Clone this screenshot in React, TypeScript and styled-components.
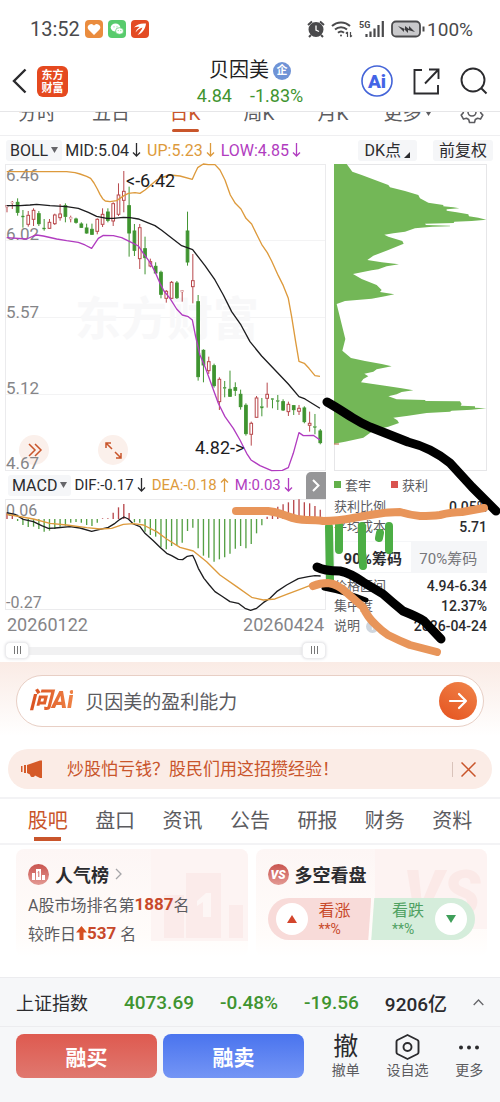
import React from "react";
import styled, { createGlobalStyle } from "styled-components";

const GlobalStyle = createGlobalStyle`
  * { box-sizing: border-box; }
  body {
    margin: 0;
    background: #fff;
    color: #2b2b2e;
    font-family: Roboto, "Noto Sans CJK SC", sans-serif;
  }
  button, input { font: inherit; color: inherit; border: 0; padding: 0; margin: 0; background: none; }
  button { cursor: pointer; }
  svg { display: block; flex: none; }
  dl, dd, dt, h1, h2, p { margin: 0; font-weight: 400; }
`;

const GREEN = "#3f9430";
const ORANGE = "#dd9a3c";
const PURPLE = "#b13cc0";
const ACCENT = "#c9552b";

/* ---------- status bar and header ---------- */

const StatusBar = styled.div`
  display: flex;
  align-items: center;
  justify-content: space-between;
  height: 58px;
  padding: 0 27px 0 30px;
  font-size: 20px;
  color: #4a4a4c;
`;
const StatusGroup = styled.div<{ $gap: number }>`
  display: flex;
  align-items: center;
  gap: ${(p) => p.$gap}px;
`;
const BatteryLevel = styled.span`
  display: flex;
  align-items: center;
  gap: 2px;
  font-size: 19px;
`;
const Header = styled.header`
  display: grid;
  grid-template-columns: 1fr auto 1fr;
  height: 54px;
  padding: 0 12px;
  border-bottom: 1px solid #e6e6e8;
`;
const HeaderSide = styled.div<{ $end?: boolean }>`
  display: flex;
  align-items: center;
  justify-content: ${(p) => (p.$end ? "flex-end" : "flex-start")};
  gap: ${(p) => (p.$end ? 20 : 10)}px;
  height: 46px;
`;
const IconButton = styled.button`
  display: flex;
  align-items: center;
  justify-content: center;
`;
const AppLogo = styled.span`
  display: grid;
  place-content: center;
  width: 31px;
  height: 31px;
  border-radius: 6px;
  background: #e5491f;
  color: #fff;
  font: 700 11px/13px "Noto Sans CJK SC", sans-serif;
  text-align: center;
`;
const StockTitle = styled.h1`
  display: flex;
  align-items: center;
  justify-content: center;
  gap: 4px;
  font-size: 20px;
  line-height: 25px;
  color: #1f1f22;
`;
const CompanyBadge = styled.span`
  display: grid;
  place-content: center;
  width: 18px;
  height: 18px;
  border-radius: 50%;
  background: #6f93d6;
  color: #fff;
  font-size: 11px;
  font-weight: 700;
  line-height: 16px;
`;
const StockPrice = styled.div`
  display: flex;
  justify-content: center;
  gap: 18px;
  font-size: 18px;
  line-height: 25px;
  color: ${GREEN};
`;

/* ---------- chart tabs and indicator bars ---------- */

const PeriodTabs = styled.nav`
  display: flex;
  align-items: flex-end;
  height: 24px;
  overflow: hidden;
  border-bottom: 1px solid #efeff1;
`;
const PeriodTab = styled.button<{ $active?: boolean }>`
  position: relative;
  display: flex;
  align-items: center;
  justify-content: center;
  gap: 4px;
  flex: 74;
  height: 36px;
  padding-bottom: 6px;
  font-size: 19px;
  line-height: 26px;
  color: ${(p) => (p.$active ? ACCENT : "#5c5c60")};
  &::after {
    content: "";
    position: absolute;
    bottom: 3px;
    width: 27px;
    height: 3px;
    border-radius: 2px;
    background: ${(p) => (p.$active ? ACCENT : "transparent")};
  }
`;
const SettingsTab = styled(PeriodTab)`
  flex: 56;
  padding-bottom: 10px;
`;
const IndicatorBar = styled.div`
  display: flex;
  align-items: center;
  gap: 3px;
  height: 28px;
  padding: 0 7px 0 6px;
`;
const Chip = styled.button`
  display: flex;
  align-items: center;
  gap: 3px;
  height: 21px;
  padding: 0 4px;
  border-radius: 3px;
  background: #f5f6f8;
  font-size: 16px;
  line-height: 21px;
  white-space: nowrap;
`;
const ChipGroup = styled.div`
  display: flex;
  gap: 16px;
  margin-left: auto;
`;
const OptionChip = styled(Chip)`
  padding: 0 6px;
`;
const Reading = styled.span<{ $color: string; $small?: boolean }>`
  display: flex;
  align-items: center;
  gap: 3px;
  font-size: ${(p) => (p.$small ? 15 : 16)}px;
  line-height: 21px;
  white-space: nowrap;
  margin-right: 3px;
  color: ${(p) => p.$color};
`;

/* ---------- chart area ---------- */

const ChartSection = styled.section`
  position: relative;
`;
const ChartGrid = styled.div`
  display: grid;
  grid-template-columns: 321fr 153fr;
  column-gap: 8px;
  padding: 0 13px 0 5px;
`;
const ChartSvg = styled.svg`
  width: 100%;
  height: auto;
  overflow: visible;
  font-family: Roboto, "Noto Sans CJK SC", sans-serif;
`;
const MacdBar = styled(IndicatorBar)`
  padding: 0 0 0 3px;
`;
const NextButton = styled(IconButton)`
  width: 20px;
  height: 27px;
  margin-left: auto;
  border-radius: 5px 0 0 0;
  background: #969698;
`;
const Dates = styled.div`
  display: flex;
  justify-content: space-between;
  padding: 0 2px 0 2px;
  font-size: 18px;
  line-height: 30px;
  color: #858588;
`;
const RangeTrack = styled.div`
  position: relative;
  height: 22px;
  padding: 7px 4px;
  &::before {
    content: "";
    display: block;
    height: 8px;
    background: #f1f1f2;
  }
`;
const RangeInput = styled.input`
  position: absolute;
  inset: 1px 0 auto 0;
  width: 100%;
  height: 18px;
  appearance: none;
  pointer-events: none;
  &::-webkit-slider-thumb {
    appearance: none;
    pointer-events: auto;
    width: 24px;
    height: 17px;
    border: 1px solid #ececee;
    border-radius: 5px;
    background: linear-gradient(90deg, #777 1px, transparent 1px 3px, #777 3px 4px, transparent 4px 6px, #777 6px 7px) center / 7px 8px no-repeat #fff;
    box-shadow: 0 0 3px #dcdce0;
  }
`;
const Legend = styled.div`
  display: flex;
  align-items: center;
  gap: 20px;
  height: 26px;
  font-size: 13px;
  color: #5b5b5f;
`;
const LegendItem = styled.span<{ $color: string }>`
  display: flex;
  align-items: center;
  gap: 4px;
  &::before {
    content: "";
    width: 7px;
    height: 7px;
    background: ${(p) => p.$color};
  }
`;
const StatRow = styled.div`
  display: flex;
  align-items: center;
  justify-content: space-between;
  height: 20px;
  line-height: 18px;
  white-space: nowrap;
  dt { display: flex; align-items: center; gap: 6px; font-size: 13px; color: #5b5b5f; }
  dd { font-size: 14px; font-weight: 500; color: #2b2b2e; }
`;
const InfoDot = styled.span`
  width: 13px;
  height: 13px;
  border-radius: 50%;
  background: #cfd6de;
  color: #fff;
  font-size: 10px;
  line-height: 13px;
  text-align: center;
`;
const ChipsToggle = styled.div`
  display: grid;
  grid-template-columns: 1fr 1fr;
  height: 32px;
  margin: 4px 0 3px;
  border: 1px solid #f5f6f8;
`;
const ToggleButton = styled.button<{ $active?: boolean }>`
  background: ${(p) => (p.$active ? "#fff" : "#f5f6f8")};
  color: ${(p) => (p.$active ? "#2b2b2e" : "#77777b")};
  font-size: 15px;
  font-weight: ${(p) => (p.$active ? 700 : 400)};
  white-space: nowrap;
`;
const Drawing = styled.svg`
  position: absolute;
  top: 0;
  left: 0;
  width: 100%;
  height: auto;
  pointer-events: none;
`;

/* ---------- AI question and banner ---------- */

const AskSection = styled.section`
  padding: 13px 16px 22px;
  background: linear-gradient(#faebe5, #fff 85%);
`;
const AskForm = styled.form`
  display: flex;
  align-items: center;
  gap: 12px;
  height: 52px;
  padding: 0 6px 0 12px;
  border: 1px solid #e8cfc5;
  border-radius: 26px;
  background: #fff;
`;
const AskLogo = styled.span`
  font-size: 23px;
  line-height: 30px;
  font-weight: 900;
  font-style: italic;
  white-space: nowrap;
  background: linear-gradient(90deg, #d94f1e, #ee8246);
  background-clip: text;
  color: transparent;
`;
const AskInput = styled.input`
  flex: 1;
  min-width: 0;
  height: 30px;
  padding-bottom: 2px;
  font-size: 19px;
  color: #5b5b5f;
  outline: 0;
`;
const AskSubmit = styled(IconButton)`
  width: 38px;
  height: 38px;
  border-radius: 50%;
  background: linear-gradient(210deg, #f0854a, #e5521f);
`;
const Banner = styled.aside`
  display: flex;
  align-items: center;
  height: 40px;
  margin: 0 8px 8px;
  padding: 0 16px 0 13px;
  border-radius: 20px;
  background: #fbece6;
  color: ${ACCENT};
`;
const BannerText = styled.p`
  flex: 1;
  margin-left: 24px;
  font-size: 17px;
  line-height: 26px;
`;
const BannerClose = styled(IconButton)`
  padding-left: 8px;
  border-left: 1px solid #d9c3ba;
`;

/* ---------- section tabs and cards ---------- */

const SectionTabs = styled.nav`
  display: flex;
  height: 48px;
  padding: 0 14px;
  border-top: 2px solid #f3f3f5;
  border-bottom: 2px solid #f3f3f5;
`;
const SectionTab = styled.button<{ $active?: boolean }>`
  position: relative;
  flex: 1;
  font-size: 20px;
  line-height: 44px;
  color: ${(p) => (p.$active ? ACCENT : "#5b5b5f")};
  &::after {
    content: "";
    position: absolute;
    left: calc(50% - 14px);
    bottom: 2px;
    width: 27px;
    height: 4px;
    background: ${(p) => (p.$active ? ACCENT : "transparent")};
  }
`;
const Cards = styled.section`
  display: grid;
  grid-template-columns: 1fr 1fr;
  gap: 8px;
  padding: 4px 13px 20px 16px;
`;
const Card = styled.article`
  position: relative;
  height: 108px;
  padding: 11px 12px 0;
  border-radius: 8px;
  overflow: hidden;
  background: linear-gradient(#fdf6f5, #fffcfa 80%, #fff);
`;
const CardArt = styled.svg`
  position: absolute;
  top: 0;
  right: 0;
`;
const CardTitle = styled.h2`
  position: relative;
  display: flex;
  align-items: center;
  gap: 6px;
  height: 28px;
  font-size: 18px;
  font-weight: 700;
`;
const CardLine = styled.p`
  position: relative;
  display: flex;
  align-items: center;
  margin-top: 3px;
  height: 26px;
  font-size: 16px;
  color: #5b5b5f;
  white-space: nowrap;
  strong { font-size: 17px; color: #c8492a; }
`;
const Vote = styled.div`
  position: relative;
  display: grid;
  grid-template-columns: 1fr 1fr;
  height: 42px;
  margin-top: 10px;
  border-radius: 21px;
  overflow: hidden;
`;
const VoteButton = styled.button<{ $up?: boolean }>`
  display: flex;
  flex-direction: ${(p) => (p.$up ? "row" : "row-reverse")};
  align-items: center;
  gap: 11px;
  padding: 0 8px;
  background: ${(p) => (p.$up ? "#f8dbd9" : "#d5eddb")};
  color: ${(p) => (p.$up ? "#c8492a" : "#4fa162")};
  clip-path: ${(p) => (p.$up ? "polygon(0 0, 100% 0, calc(100% - 3px) 100%, 0 100%)" : "polygon(3px 0, 100% 0, 100% 100%, 0 100%)")};
`;
const VoteMark = styled.span`
  display: grid;
  place-content: center;
  width: 32px;
  height: 32px;
  border-radius: 50%;
  background: #fff;
`;
const VoteLabel = styled.span`
  display: flex;
  flex-direction: column;
  text-align: left;
  font-size: 16px;
  line-height: 20px;
  small { font-size: 14px; line-height: 16px; }
`;

/* ---------- footer ---------- */

const Footer = styled.footer`
  background: #f6f7f9;
  border-top: 1px solid #ececef;
`;
const IndexRow = styled.div`
  display: flex;
  align-items: center;
  justify-content: space-between;
  height: 48px;
  padding: 0 16px;
  font-size: 18px;
  white-space: nowrap;
`;
const IndexName = styled.span`
  margin-right: 10px;
`;
const IndexValue = styled.span<{ $color?: string }>`
  font-size: 19px;
  font-weight: 500;
  color: ${(p) => p.$color ?? "#2b2b2e"};
`;
const ActionRow = styled.div`
  display: flex;
  gap: 11px;
  height: 77px;
  padding: 7px 0 0 16px;
  border-top: 1px solid #ececef;
`;
const TradeButtons = styled.div`
  display: flex;
  gap: 6px;
  flex: 288;
`;
const TradeButton = styled.button<{ $from: string; $to: string }>`
  flex: 1;
  height: 44px;
  border-radius: 8px;
  background: linear-gradient(${(p) => p.$from}, ${(p) => p.$to});
  color: #fff;
  font-size: 21px;
  font-weight: 700;
`;
const ToolButtons = styled.div`
  display: flex;
  flex: 185;
`;
const ToolButton = styled.button`
  display: flex;
  flex-direction: column;
  align-items: center;
  flex: 1;
  height: 48px;
  font-size: 14px;
  line-height: 20px;
  color: #5b5b5f;
  white-space: nowrap;
`;
const ToolIcon = styled.span`
  display: flex;
  align-items: center;
  height: 26px;
  font-size: 25px;
  color: #2b2b2e;
`;

/* ---------- data ---------- */

// rising flag, high, body top, body bottom, low
const candles: [number, number, number, number, number][] = [
  [1, 150, 151, 156, 172], [1, 138, 141, 145, 162], [0, 130, 142, 172, 182], [0, 165, 183, 186, 218],
  [1, 168, 181, 208, 215], [1, 160, 166, 193, 213], [0, 168, 176, 206, 213], [0, 192, 219, 222, 227],
  [1, 192, 202, 220, 222], [1, 176, 180, 206, 210], [1, 147, 177, 188, 197], [0, 145, 152, 184, 202],
  [1, 182, 187, 192, 202], [0, 188, 192, 202, 206], [0, 202, 207, 217, 219], [0, 206, 219, 234, 236],
  [0, 206, 223, 238, 239], [1, 190, 193, 229, 238], [1, 160, 178, 208, 216], [0, 160, 171, 196, 202],
  [1, 142, 146, 198, 213], [1, 85, 120, 178, 183], [1, 48, 109, 136, 172], [0, 95, 152, 234, 305],
  [0, 207, 228, 286, 303], [1, 207, 218, 311, 342], [0, 245, 281, 308, 358], [1, 311, 320, 333, 337],
  [0, 322, 334, 354, 356], [0, 347, 352, 418, 430], [1, 405, 409, 430, 443], [1, 378, 382, 430, 432],
  [0, 378, 384, 428, 432], [1, 405, 407, 411, 440], [0, 170, 228, 321, 332], [1, 297, 377, 395, 445],
  [0, 420, 440, 665, 677], [0, 583, 586, 630, 682], [1, 605, 620, 647, 657], [0, 626, 632, 692, 698],
  [1, 667, 673, 740, 765], [0, 678, 697, 700, 727], [0, 647, 703, 724, 725], [0, 682, 698, 706, 723],
  [0, 704, 718, 755, 764], [0, 745, 751, 836, 842], [1, 800, 805, 838, 872], [1, 723, 729, 787, 788],
  [0, 729, 755, 759, 784], [1, 683, 718, 730, 758], [0, 730, 731, 734, 760], [0, 720, 737, 740, 765],
  [0, 733, 740, 765, 768], [1, 740, 748, 770, 783], [0, 750, 752, 764, 780], [1, 750, 760, 769, 780],
  [0, 754, 759, 800, 805], [1, 770, 805, 811, 830], [0, 777, 815, 818, 838], [0, 822, 828, 863, 868],
];
const upper =
  "20,50 200,50 225,53 240,57 260,64 272,70 282,84 292,102 300,118 308,131 316,138 330,140 350,137 372,122 385,115 405,113 420,115 435,105 450,92 470,75 490,66 510,60 540,63 577,73 585,55 593,38 610,27 625,29 645,29 660,45 675,75 691,120 706,145 723,162 738,190 755,207 770,238 785,268 802,293 815,318 835,362 850,392 865,430 875,485 887,560 897,619 913,625 927,640 945,662 960,664";
const middle =
  "20,152 60,152 90,150 110,148 150,152 200,155 235,160 265,172 290,184 320,190 340,190 370,187 390,188 415,192 435,200 465,212 485,226 512,247 545,272 578,284 615,332 645,375 670,420 695,470 723,510 750,560 785,603 825,645 865,687 897,725 915,732 960,760";
const lower =
  "20,248 80,252 100,243 110,240 130,243 170,252 200,257 235,262 255,270 275,280 285,265 295,250 310,241 340,242 365,248 400,265 415,273 430,295 450,322 465,350 480,385 492,408 510,430 530,462 547,480 565,485 577,495 587,545 600,600 615,635 635,690 655,745 675,785 700,820 720,855 740,895 753,915 780,932 815,947 847,946 865,938 880,895 897,833 910,842 940,841 960,855";
const profile =
  "27,27 65,27 82,50 110,60 190,90 195,97 240,108 280,120 285,130 310,143 355,150 355,154 385,157 403,160 365,163 365,167 395,172 430,178 432,184 460,188 484,194 440,198 388,200 386,204 300,206 303,210 375,212 375,214 322,215 270,220 240,230 205,235 178,239 190,245 232,258 236,266 190,285 145,302 127,315 170,322 222,328 185,334 160,343 140,346 84,357 110,372 155,390 170,405 165,411 208,418 180,424 140,431 60,438 35,447 61,552 52,587 78,609 120,618 170,627 200,634 155,643 145,650 118,656 130,664 115,672 108,682 180,692 230,700 265,706 230,711 215,718 190,724 215,733 300,735 302,738 405,739 410,747 407,752 450,754 450,758 484,760 440,764 380,767 375,770 305,774 250,782 205,788 217,796 222,804 190,815 160,822 140,830 115,848 60,860 27,866";
const macdEnds = [
  130, 135, 153, 165, 171, 170, 177, 185, 182, 177, 170, 167, 158, 156, 158, 165, 168, 158, 145, 145,
  128, 112, 102, 129, 157, 158, 185, 195, 200, 232, 238, 228, 225, 218, 183, 173, 235, 257, 263, 275,
  268, 262, 251, 236, 228, 235, 222, 190, 166, 140, 130, 110, 103, 97, 90, 88, 97, 100, 108, 119,
];
const dif =
  "20,128 45,133 70,148 100,155 125,167 145,175 165,174 210,170 240,174 275,184 300,178 325,172 345,160 360,148 372,141 385,147 400,162 420,170 435,190 460,212 480,232 500,250 515,257 535,268 548,269 562,259 578,256 585,270 595,295 612,325 628,345 645,365 665,378 690,395 715,400 735,415 752,421 770,415 790,398 810,385 830,365 860,345 895,326 925,320 945,317 962,318";
const dea =
  "20,133 50,138 100,147 150,160 200,165 260,173 300,177 335,175 370,163 400,161 430,165 470,185 500,207 540,232 580,243 620,275 660,315 710,350 755,382 790,390 825,387 860,373 900,358 935,345 960,337";

/* ---------- small drawings ---------- */

const Arrow = ({ up }: { up?: boolean }) => (
  <svg width="9" height="16" viewBox="0 0 9 16" fill="none" stroke="currentColor" strokeWidth="1.3">
    <path d={up ? "M4.5 15V2M1 5.5 4.5 2 8 5.5" : "M4.5 1v13M1 10.500 4.500 14 8 10.500"} />
  </svg>
);
const Caret = () => (
  <svg width="7" height="6" viewBox="0 0 7 6"><path d="M0 0h7L3.500 6z" fill="#66666a" /></svg>
);
const CardIcon = ({ kind }: { kind: "rank" | "vs" }) => (
  <svg width="21" height="21" viewBox="0 0 21 21">
    <defs>
      <linearGradient id={kind} x1="0" y1="0" x2="0" y2="1">
        <stop offset="0" stopColor="#c9544f" />
        <stop offset="1" stopColor="#e39a94" />
      </linearGradient>
    </defs>
    <circle cx="10.500" cy="10.500" r="10.500" fill={`url(#${kind})`} />
    {kind === "rank" ? (
      <>
        <path d="M4 9h3v7H4zM8 5h5v11H8zM14 11h3v5h-3z" fill="#fff" />
        <path d="M9.700 8.500 10.800 7.500V13" stroke="#cf6a64" fill="none" />
      </>
    ) : (
      <text x="10" y="15" fontSize="12" fontWeight="900" fontStyle="italic" fill="#fff" textAnchor="middle">VS</text>
    )}
  </svg>
);

/* ---------- charts ---------- */

const PriceChart = () => (
  <ChartSvg viewBox="0 0 321 307">
    <path d="M0 76.500h321M0 153.500h321M0 230.500h321" stroke="#f3f3f4" />
    <rect x=".5" y=".5" width="320" height="306" fill="none" stroke="#ebebed" />
    <text x="70" y="171" fontSize="46" fontWeight="700" fill="#f8f8f9">东方财富</text>
    <g fill="#fbf0eb">
      <circle cx="29" cy="286" r="15" />
      <circle cx="108" cy="286" r="15" />
    </g>
    <g fontSize="17" fill="#858588">
      <text x="1" y="17">6.46</text>
      <text x="1" y="76">6.02</text>
      <text x="1" y="154">5.57</text>
      <text x="1" y="230">5.12</text>
      <text x="1" y="305">4.67</text>
    </g>
    <g fill="none" stroke={ACCENT} strokeWidth="1.500">
      <path d="M24 280l6 6-6 6M30 280l6 6-6 6" />
      <path d="M107 285l-6-6M101 284v-5h5M110 288l6 6M116 289v5h-5" />
    </g>
    <g transform="translate(-5 -9) scale(.3333)" strokeWidth="3">
      {candles.map(([up, high, top, bottom, low], i) => {
        const x = 21 + i * 15.93;
        const flat = bottom - top < 6;
        return (
          <g key={i} stroke={up ? "#b8474b" : GREEN} fill={up ? "#fff" : GREEN}>
            <path d={`M${x} ${high}V${top}M${x} ${bottom}V${low}`} />
            <rect x={x - 4} y={top} width="8" height={bottom - top} strokeWidth={flat ? 1 : 3} />
          </g>
        );
      })}
      <g fill="none" strokeWidth="4" strokeLinejoin="round">
        <polyline points={upper} stroke={ORANGE} />
        <polyline points={middle} stroke="#1d1d1f" />
        <polyline points={lower} stroke={PURPLE} />
      </g>
    </g>
    <g fontSize="18" fill="#1d1d1f">
      <text x="121" y="23">&lt;-6.42</text>
      <text x="190" y="290">4.82-&gt;</text>
    </g>
  </ChartSvg>
);

const ProfileChart = () => (
  <ChartSvg viewBox="0 0 153 307">
    <rect x=".5" y=".5" width="152" height="306" fill="none" stroke="#e6e6e8" />
    <polygon points={profile} fill="#73b757" transform="translate(-9 -9) scale(.3333)" />
    <path d="M0 280h5" stroke="#b5653a" />
  </ChartSvg>
);

const MacdChart = () => (
  <ChartSvg viewBox="0 0 321 111">
    <rect x=".5" y=".5" width="320" height="110" fill="none" stroke="#ebebed" />
    <g fontSize="16" fill="#858588">
      <text x="1" y="17">0.06</text>
      <text x="1" y="109">-0.27</text>
    </g>
    <g transform="translate(-5 -29) scale(.3333)" fill="none">
      {macdEnds.map((end, i) => (
        <path key={i} d={`M${21 + i * 15.93} 147V${end}`} stroke={end < 147 ? "#b8474b" : "#55a045"} strokeWidth="4" />
      ))}
      <polyline points={dif} stroke="#1d1d1f" strokeWidth="4" strokeLinejoin="round" />
      <polyline points={dea} stroke={ORANGE} strokeWidth="4" strokeLinejoin="round" />
    </g>
  </ChartSvg>
);

const HandDrawing = () => (
  <Drawing viewBox="0 164 500 498" fill="none" strokeWidth="8" strokeLinecap="round" strokeLinejoin="round">
    <g stroke="#4cae45">
      <path d="M329 527 330 580M339 524V550M362 526V552L363 566M380 533 379 538M389 526V550" />
    </g>
    <path d="M324 588Q345 592 366 600" stroke="#000" strokeWidth="5" />
    <path d="M327 402C336 407 345 413 353 418Q361 423 370 427L408 442Q420 445 430 450T450 463L472 487 496 511" stroke="#000" strokeWidth="9" />
    <path d="M317 567Q324 571 340 571 350 573 363 582L383 594Q392 602 403 611 418 617 424 621L441 639" stroke="#000" strokeWidth="9" />
    <g stroke="#e8955a">
      <path d="M236 511H268Q277 512 287 516T307 520 323 521C343 521 350 518 370 515Q385 512 400 512 410 515 420 516 432 516 440 515 452 512 462 512L484 508" />
      <path d="M313 586Q320 583 328 583 338 584 347 593L363 607Q368 618 376 625 382 631 388 635 400 641 410 645L437 652" />
    </g>
  </Drawing>
);

/* ---------- page ---------- */

export default function App() {
  return (
    <>
      <GlobalStyle />
      <StatusBar>
        <StatusGroup $gap={5}>
          <span>13:52</span>
          <svg width="18" height="18" viewBox="0 0 18 18">
            <rect width="18" height="18" rx="4" fill="#ea8c3e" />
            <path d="M9 15 3.500 9.500a3.300 3.300 0 0 1 5.500-4 3.300 3.300 0 0 1 5.500 4z" fill="#fff" />
          </svg>
          <svg width="18" height="18" viewBox="0 0 18 18">
            <rect width="18" height="18" rx="4" fill="#58cb6c" />
            <ellipse cx="7.500" cy="7.500" rx="4.800" ry="4" fill="#fff" />
            <ellipse cx="11.500" cy="11" rx="4" ry="3.300" fill="#fff" stroke="#58cb6c" strokeWidth=".7" />
            <path d="M6 6.500v.8M9 6.500v.8M10.200 10.300v.8M12.800 10.300v.8" stroke="#58cb6c" />
          </svg>
          <svg width="18" height="18" viewBox="0 0 18 18">
            <rect width="18" height="18" rx="4" fill="#e34a23" />
            <path d="M3 7.500C6 4 10 3 15 3.500 14.500 9 11.500 13 6.500 15c2-2.500 4-5 5-7.500C9 8 6.500 10 4.500 12.500 5 10.500 6.500 8.500 8.500 7 6.500 6.500 5 6.800 3 7.500z" fill="#fff" />
          </svg>
        </StatusGroup>
        <StatusGroup $gap={6}>
          <svg width="18" height="18" viewBox="0 0 18 18" fill="none" stroke="#4a4a4c" strokeWidth="2">
            <circle cx="9" cy="9.500" r="6.500" fill="#4a4a4c" />
            <path d="M1 5l4-3.500M17 5l-4-3.500M4 15l-2 2M14 15l2 2" />
            <path d="M9 5.500v4.500l3 1.500" stroke="#fff" strokeWidth="1.300" />
          </svg>
          <svg width="22" height="18" viewBox="0 0 22 18" fill="none" stroke="#4a4a4c" strokeWidth="2">
            <path d="M1 6a13 13 0 0 1 18 0M4 9.500a9 9 0 0 1 12 0M7 12.800a4.500 4.500 0 0 1 6 0" />
            <circle cx="10" cy="15.500" r="1" fill="#4a4a4c" stroke="none" />
            <path d="M16.500 12v5M14.800 13.500l1.700-1.700M19.500 17v-5M21 15.500 19.300 17" strokeWidth="1.200" />
          </svg>
          <svg width="26" height="18" viewBox="0 0 26 18">
            <text x="0" y="8" fontSize="9" fontWeight="700" fill="#4a4a4c">5G</text>
            <path d="M7.500 14v3M11.500 11.500V17M15.500 8.500V17M19.500 5V17M23.800 1V17" stroke="#4a4a4c" strokeWidth="2.200" />
          </svg>
          <BatteryLevel>
            <svg width="34" height="18" viewBox="0 0 34 18">
              <rect x="1" y="1.500" width="28" height="15" rx="4" fill="#c9c9cb" stroke="#4a4a4c" strokeWidth="1.800" />
              <path d="M32.500 6.500v5" stroke="#4a4a4c" strokeWidth="2" />
              <path d="M7 6l7 3 0-3 4 3V6l6 6-7-2 0 3-4-4v3z" fill="#3c3c3e" />
            </svg>
            100%
          </BatteryLevel>
        </StatusGroup>
      </StatusBar>

      <Header>
        <HeaderSide>
          <IconButton aria-label="返回">
            <svg width="15" height="26" viewBox="0 0 15 26" fill="none" stroke="#2b2b2e" strokeWidth="2.400">
              <path d="M13.500 1.500 2 13l11.500 11.500" />
            </svg>
          </IconButton>
          <AppLogo>东方<br />财富</AppLogo>
        </HeaderSide>
        <div>
          <StockTitle>贝因美<CompanyBadge>企</CompanyBadge></StockTitle>
          <StockPrice><span>4.84</span><span>-1.83%</span></StockPrice>
        </div>
        <HeaderSide $end>
          <IconButton aria-label="Ai">
            <svg width="32" height="32" viewBox="0 0 32 32">
              <circle cx="16" cy="16" r="15" fill="none" stroke="#4464d8" strokeWidth="1.600" />
              <text x="16" y="22.500" fontSize="19" fontWeight="900" fill="#4464e6" textAnchor="middle">Ai</text>
            </svg>
          </IconButton>
          <IconButton aria-label="分享">
            <svg width="27" height="27" viewBox="0 0 27 27" fill="none" stroke="#2b2b2e" strokeWidth="1.900">
              <path d="M9 2H1.500v23.500h23.500V17M16 1.500h9.500V11M25 2 12 15.500" />
            </svg>
          </IconButton>
          <IconButton aria-label="搜索">
            <svg width="28" height="28" viewBox="0 0 28 28" fill="none" stroke="#2b2b2e" strokeWidth="1.900">
              <circle cx="13" cy="13" r="11.500" />
              <path d="m21 21 5.500 5.500" />
            </svg>
          </IconButton>
        </HeaderSide>
      </Header>

      <PeriodTabs>
        <PeriodTab>分时</PeriodTab>
        <PeriodTab>五日</PeriodTab>
        <PeriodTab $active>日K</PeriodTab>
        <PeriodTab>周K</PeriodTab>
        <PeriodTab>月K</PeriodTab>
        <PeriodTab>更多<svg width="5" height="4" viewBox="0 0 5 4"><path d="M0 0h5L2.500 4z" fill="#5c5c60" /></svg></PeriodTab>
        <SettingsTab aria-label="设置">
          <svg width="24" height="24" viewBox="0 0 24 24" fill="none" stroke="#5c5c60" strokeWidth="1.600" strokeLinejoin="round">
            <path d="M9.500 1.500h5l.8 3 2.200 1.200 3-.8 2.300 4-2.100 2.300v1.600l2.100 2.300-2.300 4-3-.8-2.200 1.200-.8 3h-5l-.8-3-2.200-1.200-3 .8-2.300-4 2.100-2.300v-1.600L1.200 8.900l2.300-4 3 .8 2.200-1.200z" />
            <circle cx="12" cy="12" r="4" />
          </svg>
        </SettingsTab>
      </PeriodTabs>

      <IndicatorBar>
        <Chip>BOLL<Caret /></Chip>
        <Reading $color="#2b2b2e">MID:5.04<Arrow /></Reading>
        <Reading $color={ORANGE}>UP:5.23<Arrow /></Reading>
        <Reading $color={PURPLE}>LOW:4.85<Arrow /></Reading>
        <ChipGroup>
          <OptionChip>DK点<svg width="7" height="15" viewBox="0 0 7 15"><path d="M6 9v6H0z" fill="#2b2b2e" /></svg></OptionChip>
          <OptionChip>前复权</OptionChip>
        </ChipGroup>
      </IndicatorBar>

      <ChartSection>
        <ChartGrid>
          <div>
            <PriceChart />
            <MacdBar>
              <Chip>MACD<Caret /></Chip>
              <Reading $small $color="#2b2b2e">DIF:-0.17<Arrow /></Reading>
              <Reading $small $color={ORANGE}>DEA:-0.18<Arrow up /></Reading>
              <Reading $small $color={PURPLE}>M:0.03<Arrow /></Reading>
              <NextButton aria-label="下一个">
                <svg width="8" height="13" viewBox="0 0 8 13" fill="none" stroke="#fff" strokeWidth="2"><path d="m1 1 5.500 5.500L1 12" /></svg>
              </NextButton>
            </MacdBar>
            <MacdChart />
            <Dates><span>20260122</span><span>20260424</span></Dates>
            <RangeTrack>
              <RangeInput type="range" defaultValue={0} aria-label="开始日期" />
              <RangeInput type="range" defaultValue={100} aria-label="结束日期" />
            </RangeTrack>
          </div>
          <div>
            <ProfileChart />
            <Legend>
              <LegendItem $color="#62b04a">套牢</LegendItem>
              <LegendItem $color="#d9534f">获利</LegendItem>
            </Legend>
            <dl>
              <StatRow><dt>获利比例</dt><dd>0.05%</dd></StatRow>
              <StatRow><dt>平均成本</dt><dd>5.71</dd></StatRow>
            </dl>
            <ChipsToggle>
              <ToggleButton $active>90%筹码</ToggleButton>
              <ToggleButton>70%筹码</ToggleButton>
            </ChipsToggle>
            <dl>
              <StatRow><dt>价格区间</dt><dd>4.94-6.34</dd></StatRow>
              <StatRow><dt>集中度</dt><dd>12.37%</dd></StatRow>
              <StatRow><dt>说明<InfoDot>i</InfoDot></dt><dd>2026-04-24</dd></StatRow>
            </dl>
          </div>
        </ChartGrid>
        <HandDrawing />
      </ChartSection>

      <AskSection>
        <AskForm onSubmit={(e) => e.preventDefault()}>
          <AskLogo>问Ai</AskLogo>
          <AskInput aria-label="问Ai" defaultValue="贝因美的盈利能力" />
          <AskSubmit aria-label="提问">
            <svg width="20" height="18" viewBox="0 0 20 18" fill="none" stroke="#fff" strokeWidth="2.200" strokeLinecap="round" strokeLinejoin="round">
              <path d="M2 9h16M11 2l7 7-7 7" />
            </svg>
          </AskSubmit>
        </AskForm>
      </AskSection>

      <Banner>
        <svg width="22" height="18" viewBox="0 0 22 18" fill="#d55a28">
          <path d="M0 6h1.500v6H0zM3 5h2v8H3zM6 5l13-4.500h2v17.500h-2L14 15.500c-1 2.500-5 2-5-1L6 13z" />
        </svg>
        <BannerText>炒股怕亏钱？股民们用这招攒经验！</BannerText>
        <BannerClose aria-label="关闭">
          <svg width="15" height="15" viewBox="0 0 15 15" fill="none" stroke={ACCENT} strokeWidth="1.500"><path d="m.5.5 14 14m0-14-14 14" /></svg>
        </BannerClose>
      </Banner>

      <SectionTabs>
        {["股吧", "盘口", "资讯", "公告", "研报", "财务", "资料"].map((name, i) => (
          <SectionTab key={name} $active={i === 0}>{name}</SectionTab>
        ))}
      </SectionTabs>

      <Cards>
        <Card>
          <CardArt width="115" height="100" viewBox="0 0 115 100">
            <path d="M18 0h97v92H18z" fill="#fdf4f3" />
            <path d="M53 24h35v65H53zM31 46h20v43H31zM96 56h14v33H96z" fill="#fbebea" />
            <path d="m64 52 9-8h5v24h-8V53l-6 4z" fill="#fdf6f5" />
          </CardArt>
          <CardTitle>
            <CardIcon kind="rank" />人气榜
            <svg width="7" height="12" viewBox="0 0 7 12" fill="none" stroke="#a5a5a8" strokeWidth="1.300"><path d="m1 1 5 5-5 5" /></svg>
          </CardTitle>
          <CardLine>A股市场排名第<strong>1887</strong>名</CardLine>
          <CardLine>
            较昨日
            <svg width="11" height="14" viewBox="0 0 11 14"><path d="M5.500 0 11 6.500H7.500V14h-4V6.500H0z" fill="#d5501f" /></svg>
            <strong>537</strong>&nbsp;名
          </CardLine>
        </Card>
        <Card>
          <CardArt width="112" height="100" viewBox="0 0 112 100">
            <path d="M0 0h112v80H0z" fill="#fdf3f2" />
            <text x="28" y="66" fontSize="62" fontWeight="900" fontStyle="italic" fill="#fbe9e7">VS</text>
          </CardArt>
          <CardTitle><CardIcon kind="vs" />多空看盘</CardTitle>
          <Vote>
            <VoteButton $up>
              <VoteMark><svg width="10" height="8" viewBox="0 0 10 8"><path d="M5 0 10 8H0z" fill="#d3452c" /></svg></VoteMark>
              <VoteLabel>看涨<small>**%</small></VoteLabel>
            </VoteButton>
            <VoteButton>
              <VoteMark><svg width="10" height="8" viewBox="0 0 10 8"><path d="M0 0h10L5 8z" fill="#3f9f5a" /></svg></VoteMark>
              <VoteLabel>看跌<small>**%</small></VoteLabel>
            </VoteButton>
          </Vote>
        </Card>
      </Cards>

      <Footer>
        <IndexRow>
          <IndexName>上证指数</IndexName>
          <IndexValue $color={GREEN}>4073.69</IndexValue>
          <IndexValue $color={GREEN}>-0.48%</IndexValue>
          <IndexValue $color={GREEN}>-19.56</IndexValue>
          <IndexValue>9206亿</IndexValue>
          <IconButton aria-label="展开">
            <svg width="11" height="7" viewBox="0 0 11 7" fill="none" stroke="#66666a" strokeWidth="1.300"><path d="m.7 6 4.800-5 4.800 5" /></svg>
          </IconButton>
        </IndexRow>
        <ActionRow>
          <TradeButtons>
            <TradeButton $from="#de5a50" $to="#e0786f">融买</TradeButton>
            <TradeButton $from="#4a74ee" $to="#7495f5">融卖</TradeButton>
          </TradeButtons>
          <ToolButtons>
            <ToolButton><ToolIcon>撤</ToolIcon>撤单</ToolButton>
            <ToolButton>
              <ToolIcon>
                <svg width="25" height="26" viewBox="0 0 25 26" fill="none" stroke="#2b2b2e" strokeWidth="1.900" strokeLinejoin="round">
                  <path d="M12.500 1 22.500 6q1 .6 1 1.800v10.400q0 1.200-1 1.800l-10 5-10-5q-1-.6-1-1.800V7.800q0-1.200 1-1.800z" />
                  <circle cx="12.500" cy="13" r="4" />
                </svg>
              </ToolIcon>
              设自选
            </ToolButton>
            <ToolButton>
              <ToolIcon>
                <svg width="22" height="5" viewBox="0 0 22 5" fill="#2b2b2e"><circle cx="3" cy="2.500" r="2" /><circle cx="11" cy="2.500" r="2" /><circle cx="19" cy="2.500" r="2" /></svg>
              </ToolIcon>
              更多
            </ToolButton>
          </ToolButtons>
        </ActionRow>
      </Footer>
    </>
  );
}
